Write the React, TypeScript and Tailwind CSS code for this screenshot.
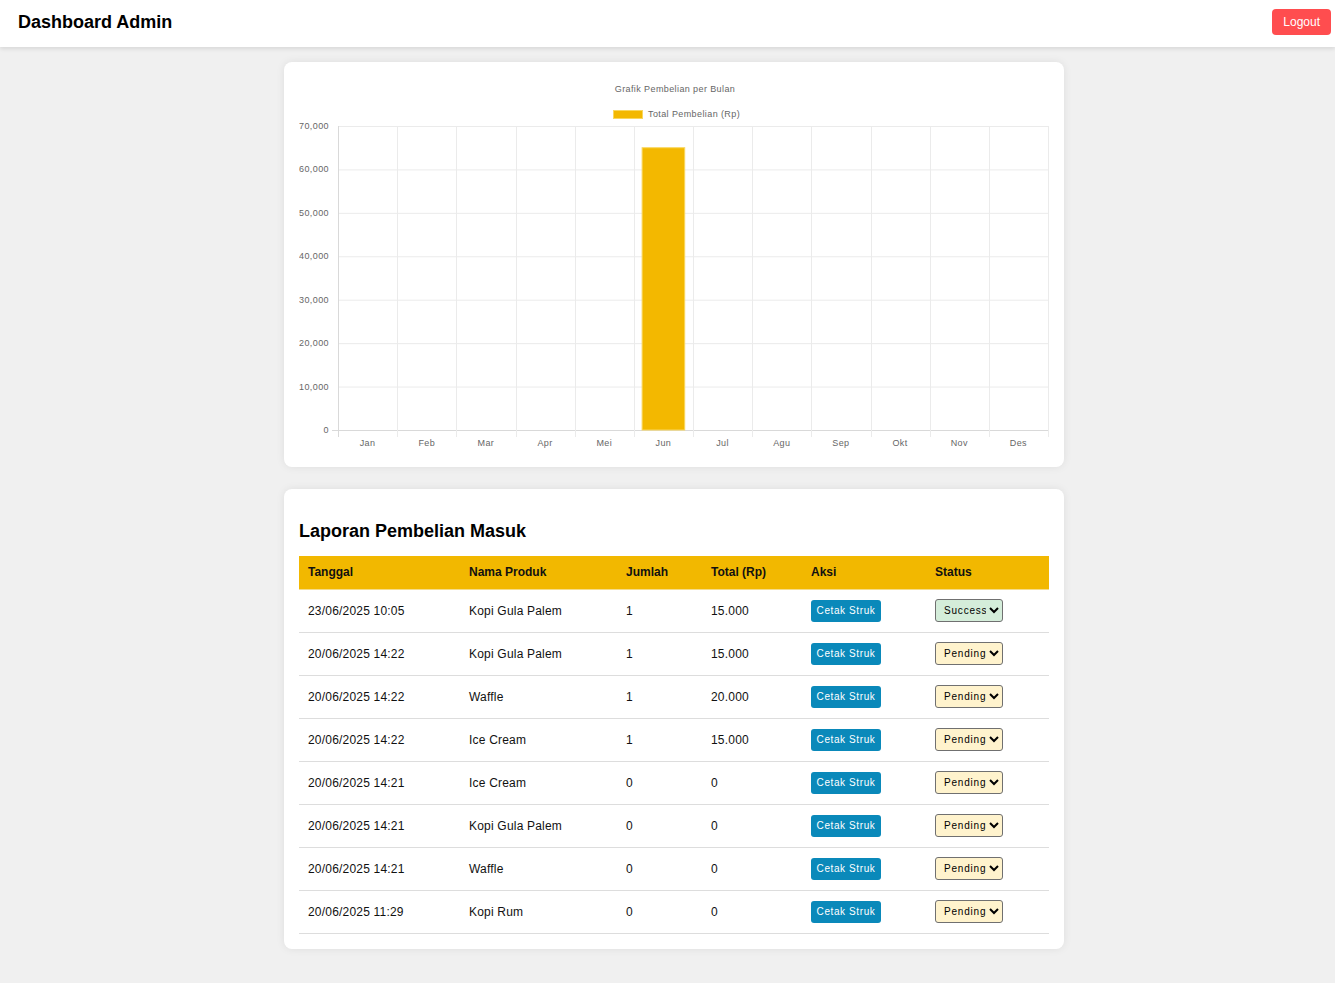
import React from "react";

const months = ["Jan", "Feb", "Mar", "Apr", "Mei", "Jun", "Jul", "Agu", "Sep", "Okt", "Nov", "Des"];
const values = [0, 0, 0, 0, 0, 65000, 0, 0, 0, 0, 0, 0];

const rows = [
  { tanggal: "23/06/2025 10:05", produk: "Kopi Gula Palem", jumlah: "1", total: "15.000", status: "Success" },
  { tanggal: "20/06/2025 14:22", produk: "Kopi Gula Palem", jumlah: "1", total: "15.000", status: "Pending" },
  { tanggal: "20/06/2025 14:22", produk: "Waffle", jumlah: "1", total: "20.000", status: "Pending" },
  { tanggal: "20/06/2025 14:22", produk: "Ice Cream", jumlah: "1", total: "15.000", status: "Pending" },
  { tanggal: "20/06/2025 14:21", produk: "Ice Cream", jumlah: "0", total: "0", status: "Pending" },
  { tanggal: "20/06/2025 14:21", produk: "Kopi Gula Palem", jumlah: "0", total: "0", status: "Pending" },
  { tanggal: "20/06/2025 14:21", produk: "Waffle", jumlah: "0", total: "0", status: "Pending" },
  { tanggal: "20/06/2025 11:29", produk: "Kopi Rum", jumlah: "0", total: "0", status: "Pending" },
];

// plot area inside the 750x375 canvas
const L = 39;
const R = 749;
const T = 49;
const B = 353;
const MAX = 70000;

function BarChart() {
  const step = (R - L) / 12;
  const ticks = [0, 10000, 20000, 30000, 40000, 50000, 60000, 70000];
  const yOf = (v: number) => B - (v / MAX) * (B - T);

  return (
    <svg width="750" height="375" viewBox="0 0 750 375" className="block" style={{ fontFamily: '"Liberation Sans", Arial, sans-serif' }}>
      {/* title + legend */}
      <text x="376" y="14.5" textAnchor="middle" fontSize="9" fill="#666" letterSpacing="0.4">
        Grafik Pembelian per Bulan
      </text>
      <rect x="314.5" y="33.5" width="29" height="8" fill="#f3b800" stroke="#f9d75e" />
      <text x="349" y="40" fontSize="9" fill="#666" letterSpacing="0.4">
        Total Pembelian (Rp)
      </text>

      {/* horizontal grid */}
      {ticks.map((t) => (
        <g key={t}>
          <line x1={t === 0 ? L - 6 : L} x2={R} y1={yOf(t) + 0.5} y2={yOf(t) + 0.5} stroke={t === 0 ? "#d9d9d9" : "#ebebeb"} />
          <text x="30" y={yOf(t) + 3} textAnchor="end" fontSize="9" fill="#666" letterSpacing="0.4">
            {t.toLocaleString("en-US")}
          </text>
        </g>
      ))}

      {/* vertical grid */}
      {Array.from({ length: 13 }).map((_, i) => (
        <line
          key={i}
          x1={Math.round(L + i * step) + 0.5}
          x2={Math.round(L + i * step) + 0.5}
          y1={T}
          y2={B + 7}
          stroke={i === 0 ? "#d9d9d9" : "#ebebeb"}
        />
      ))}

      {/* bars */}
      {values.map((v, i) => {
        if (!v) return null;
        const w = step * 0.72;
        const x = L + i * step + (step - w) / 2;
        return <rect key={i} x={x} y={yOf(v)} width={w} height={B - yOf(v)} fill="#f3b800" stroke="#f9d75e" strokeWidth="1" />;
      })}

      {/* month labels */}
      {months.map((m, i) => (
        <text key={m} x={L + i * step + step / 2} y="369" textAnchor="middle" fontSize="9" fill="#666" letterSpacing="0.4">
          {m}
        </text>
      ))}
    </svg>
  );
}

export default function App() {
  return (
    <div className="min-h-[983px] bg-[#f0f0f0] pb-8" style={{ fontFamily: '"Liberation Sans", Arial, sans-serif' }}>
      {/* Header */}
      <header className="h-[47px] bg-white shadow-[0_2px_4px_rgba(0,0,0,0.1)] flex items-center justify-between pl-[18px] pr-[4px] pb-[4px]">
        <h1 className="text-[18px] font-bold text-black leading-none">Dashboard Admin</h1>
        <button className="h-[26px] px-[11px] rounded-[4px] bg-[#ff4d4f] text-white text-[12px]">Logout</button>
      </header>

      <main className="w-[780px] ml-[284px] pt-[15px] flex flex-col gap-[22px]">
        {/* Chart */}
        <section className="bg-white rounded-[8px] shadow-[0_0_8px_rgba(0,0,0,0.08)] p-[15px]">
          <BarChart />
        </section>

        {/* Report table */}
        <section className="bg-white rounded-[8px] shadow-[0_0_8px_rgba(0,0,0,0.08)] px-[15px] pt-[31px] pb-[15px]">
          <h2 className="text-[18px] font-bold text-black leading-[22px] mb-[14px]">Laporan Pembelian Masuk</h2>
          <table className="w-[750px] table-fixed border-collapse text-[12px] text-[#111]">
            <thead>
              <tr className="bg-[#f2b800]">
                <th className="w-[161px] h-[33px] px-[9px] text-left font-bold border-b border-[#f5dc8a]">Tanggal</th>
                <th className="w-[157px] h-[33px] px-[9px] text-left font-bold border-b border-[#f5dc8a]">Nama Produk</th>
                <th className="w-[85px] h-[33px] px-[9px] text-left font-bold border-b border-[#f5dc8a]">Jumlah</th>
                <th className="w-[100px] h-[33px] px-[9px] text-left font-bold border-b border-[#f5dc8a]">Total (Rp)</th>
                <th className="w-[124px] h-[33px] px-[9px] text-left font-bold border-b border-[#f5dc8a]">Aksi</th>
                <th className="w-[123px] h-[33px] px-[9px] text-left font-bold border-b border-[#f5dc8a]">Status</th>
              </tr>
            </thead>
            <tbody>
              {rows.map((r, i) => (
                <tr key={i} className="border-b border-[#dddddd]">
                  <td className="h-[43px] px-[9px] tracking-[0.2px]">{r.tanggal}</td>
                  <td className="h-[43px] px-[9px] tracking-[0.2px]">{r.produk}</td>
                  <td className="h-[43px] px-[9px] tracking-[0.2px]">{r.jumlah}</td>
                  <td className="h-[43px] px-[9px] tracking-[0.2px]">{r.total}</td>
                  <td className="h-[43px] px-[9px]">
                    <button className="h-[22px] w-[70px] rounded-[3px] bg-[#0a89ba] text-white text-[10px] tracking-[0.6px]">
                      Cetak Struk
                    </button>
                  </td>
                  <td className="h-[43px] px-[9px]">
                    <select
                      defaultValue={r.status}
                      className={
                        "h-[23px] w-[68px] rounded-[3px] border border-[#707070] text-[10px] tracking-[0.8px] pl-[4px] text-black " +
                        (r.status === "Success" ? "bg-[#d4edda]" : "bg-[#fff3cd]")
                      }
                    >
                      <option>Pending</option>
                      <option>Success</option>
                    </select>
                  </td>
                </tr>
              ))}
            </tbody>
          </table>
        </section>
      </main>
    </div>
  );
}
